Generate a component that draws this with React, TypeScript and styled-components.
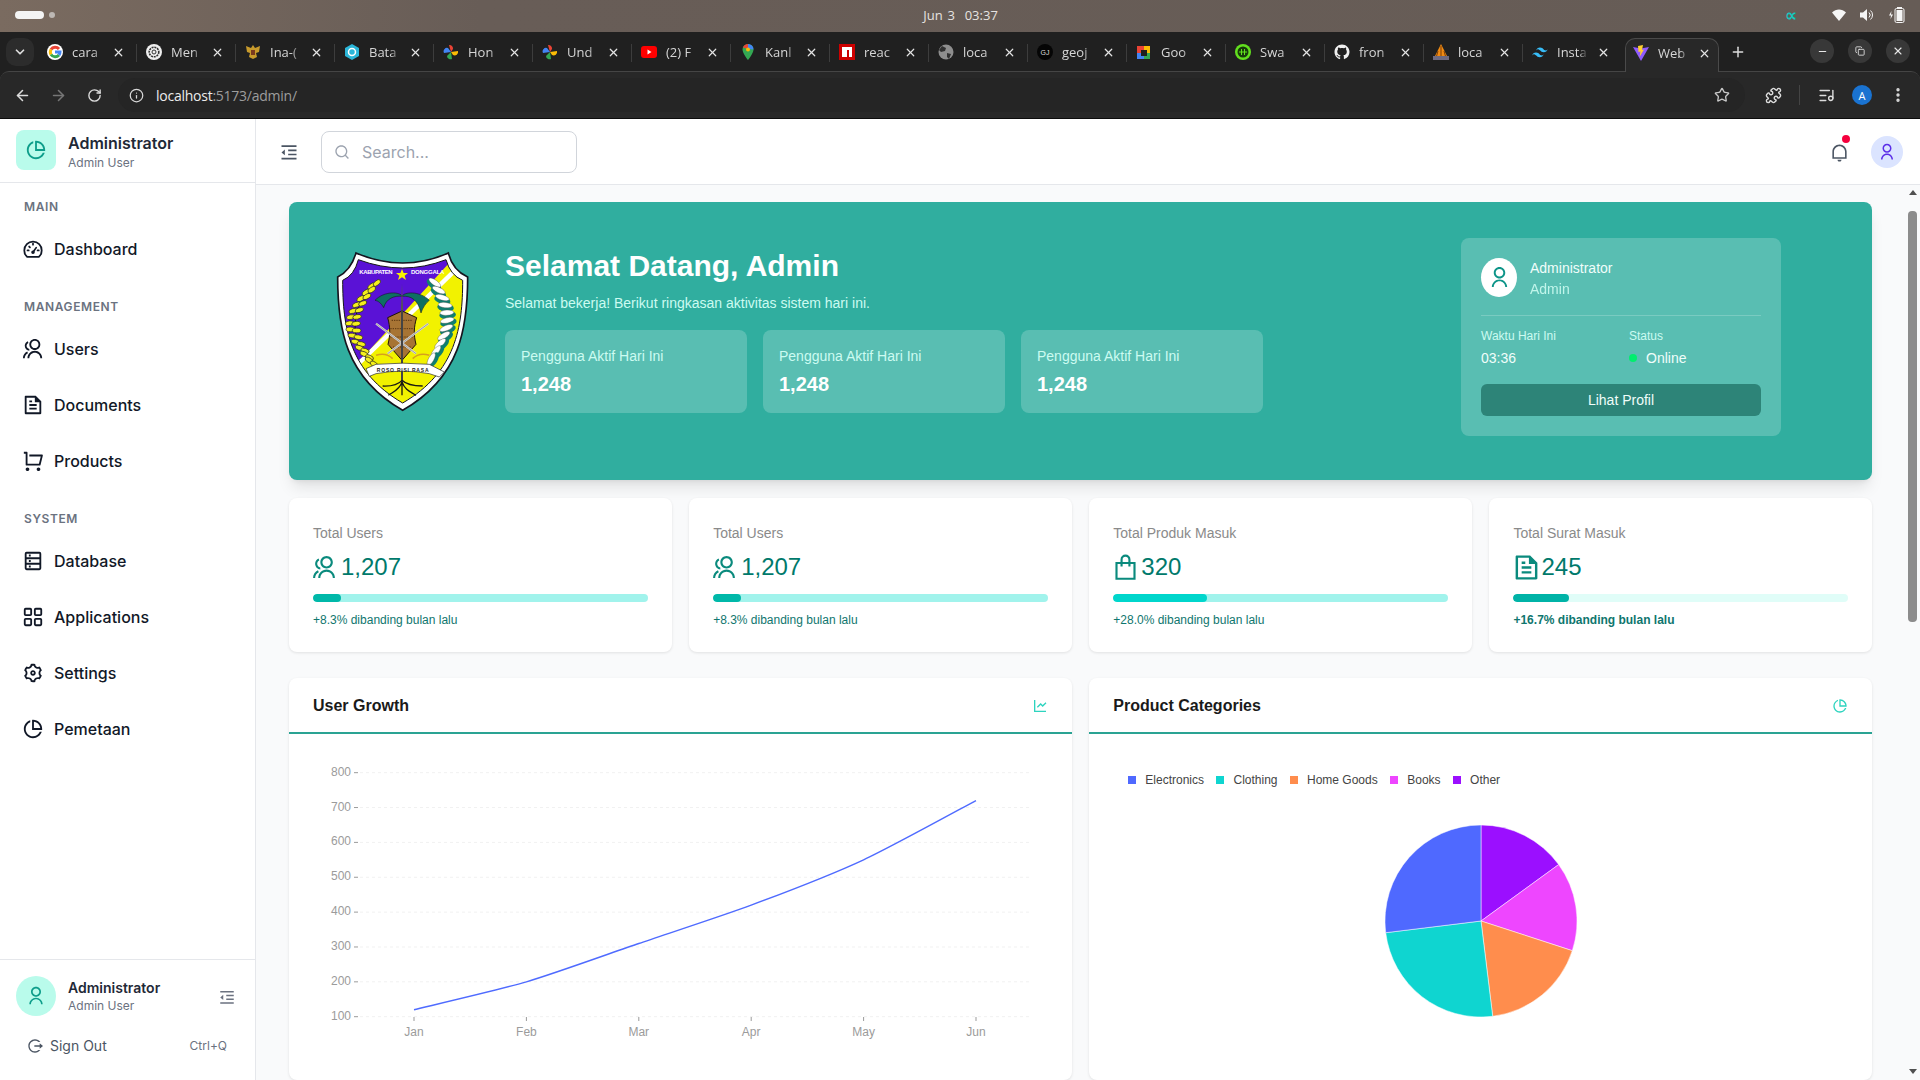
import React from 'react';
import styled, { createGlobalStyle } from 'styled-components';
import { ArrowLeft, ArrowRight, RotateCw, Info, Star, Puzzle, ListMusic, MoreVertical, Minus, X, Plus, ChevronDown, Copy, LayoutGrid } from 'lucide-react';
import {
  RiGroupLine, RiFileTextLine, RiShoppingCartLine, RiSettings3Line,
  RiPieChartLine, RiIndentDecrease, RiNotificationLine, RiUserLine, RiLogoutCircleRLine, RiSearchLine, RiLineChartLine, RiGithubFill,
} from 'react-icons/ri';

const Global = createGlobalStyle`
  html, body { margin: 0; padding: 0; width: 1920px; height: 1080px; overflow: hidden; background: #fff; }
  * { box-sizing: border-box; }
`;

const Screen = styled.div`
  width: 1920px; height: 1080px; display: flex; flex-direction: column; overflow: hidden;
  font-family: "Liberation Sans", Arial, sans-serif;
`;

/* ---------- OS bar ---------- */
const OsBar = styled.div`
  height: 32px; flex: none; display: grid; grid-template-columns: 1fr auto 1fr; align-items: center; padding: 0 14px 2px 15px;
  background: linear-gradient(to right, #7a6b60, #685d57 25%, #665c56);
`;
const Workspaces = styled.div`display: flex; align-items: center; gap: 5px;`;
const WorkspacePill = styled.span`width: 29px; height: 8px; border-radius: 4px; background: #f4f4f4;`;
const WorkspaceDot = styled.span`width: 6px; height: 6px; border-radius: 50%; background: #bdb8b4;`;
const Clock = styled.div`
  font-family: "Open Sans", sans-serif; font-size: 13px; color: #e6e3e0; word-spacing: 1.5px; white-space: pre;
`;
const Tray = styled.div`display: flex; align-items: center; justify-content: flex-end; gap: 14px; color: #f2f2f2;`;
const TrayAlpha = styled.span`font-family: "DejaVu Sans", sans-serif; font-size: 17px; font-style: italic; font-weight: 700; color: #14c8c0; margin-right: 21px;`;

/* ---------- Tabs ---------- */
const TabStrip = styled.div`
  height: 39px; flex: none; background: #202020; display: flex; align-items: flex-end; position: relative; z-index: 1; color: #d4d4d4;
`;
const TabListBtn = styled.div`
  width: 28px; height: 28px; margin: 0 4px 5px 6px; border-radius: 10px; background: #2c2c2c; display: flex; align-items: center; justify-content: center; color: #ddd;
`;
const Tab = styled.div<{ $active?: boolean; $last?: boolean }>`
  width: ${p => (p.$active ? '94px' : '99px')}; height: 33px; position: relative; display: flex; align-items: center; padding: 0 0 5px 9px;
  margin-left: ${p => (p.$active ? '3px' : '0')};
  margin-right: ${p => (p.$active ? '2px' : '0')};
  background: ${p => (p.$active ? '#282828' : 'transparent')};
  border-radius: 10px 10px 0 0;
  ${p => p.$active ? 'border: 1px solid #4a4a4a; border-bottom: none; margin-bottom: -1px; height: 34px; padding-left: 7px;' : ''}
  ${p => (!p.$active && !p.$last) ? `&::after { content: ''; position: absolute; right: 0; top: 6px; width: 1px; height: 18px; background: #3d3d3d; }` : ''}
`;
const TabTitle = styled.span`
  width: 31px; margin-left: 9px; white-space: nowrap; font-family: "Open Sans", sans-serif; font-size: 13px; color: #d6d6d6;
  -webkit-mask-image: linear-gradient(to right, #000 70%, transparent);
  mask-image: linear-gradient(to right, #000 70%, transparent);
`;
const TabClose = styled.span`margin-left: 8px; width: 14px; display: flex; justify-content: center; color: #e4e4e4;`;
const NewTab = styled.div`margin: 0 0 11px 9px; display: flex; color: #ddd;`;
const WindowBtns = styled.div`margin: 0 10px 8px auto; display: flex; gap: 14px;`;
const WindowBtn = styled.div`
  width: 24px; height: 24px; border-radius: 50%; background: #383838; display: flex; align-items: center; justify-content: center; color: #e8e8e8;
`;

/* ---------- Toolbar ---------- */
const ToolbarWrap = styled.div`height: 48px; flex: none; background: #202020; border-bottom: 1px solid #0c0c0c;`;
const Toolbar = styled.div`
  height: 47px; background: #282828; border-top: 1px solid #454545; border-radius: 9px 9px 0 0; display: flex; align-items: center; padding: 0 4px; color: #dcdcdc;
`;
const ToolBtn = styled.div<{ $dim?: boolean }>`
  width: 36px; height: 36px; flex: none; display: flex; align-items: center; justify-content: center; color: ${p => (p.$dim ? '#767676' : '#dcdcdc')};
`;
const Omnibox = styled.div`
  flex: 1; height: 34px; margin: 0 10px 0 6px; border-radius: 17px; background: #252525; display: flex; align-items: center; padding-left: 9px; padding-right: 15px;
`;
const OmniInfo = styled.div`width: 18px; display: flex; justify-content: center; color: #d8d8d8; margin-right: 11px;`;
const Url = styled.div`font-family: "Open Sans", sans-serif; font-size: 14px; letter-spacing: -0.25px; color: #9d9d9d; flex: 1;`;
const UrlHost = styled.span`color: #ececec;`;
const ToolSep = styled.div`width: 1px; height: 20px; background: #444; margin: 0 8px;`;
const ProfileDot = styled.div`
  width: 20px; height: 20px; border-radius: 50%; background: #1a73d1; color: #fff; font-size: 11px; display: flex; align-items: center; justify-content: center; font-family: "Open Sans", sans-serif;
`;

/* ---------- App frame ---------- */
const Body = styled.div`flex: 1; min-height: 0; display: flex; background: #fff;`;
const Sidebar = styled.aside`
  width: 256px; flex: none; display: flex; flex-direction: column; border-right: 1px solid #e5e7eb; background: #fff; font-family: Inter, sans-serif;
`;
const SideHeader = styled.div`height: 64px; flex: none; border-bottom: 1px solid #e5e7eb; display: flex; align-items: center; gap: 12px; padding: 0 16px 1px;`;
const LogoTile = styled.div`width: 40px; height: 40px; border-radius: 8px; background: #b9fbeb; color: #0d9d8a; display: flex; align-items: center; justify-content: center;`;
const BrandText = styled.div`display: flex; flex-direction: column; padding-top: 2px;`;
const BrandName = styled.div`font-size: 16px; line-height: 24px; font-weight: 600; color: #1f2937;`;
const BrandSub = styled.div`font-size: 12px; line-height: 16px; color: #6b7280;`;
const Nav = styled.nav`flex: 1; padding-top: 16px;`;
const NavSection = styled.div`margin-bottom: 22px;`;
const NavLabel = styled.div`padding-left: 24px; margin-bottom: 6px; font-size: 12px; line-height: 16px; font-weight: 600; letter-spacing: 0.6px; color: #6b7280;`;
const NavItem = styled.div`height: 56px; display: flex; align-items: center; gap: 10px; padding: 0 22px; font-size: 16px; font-weight: 500; color: #111827;`;
const Flip = styled.span<{ $size: number }>`display: inline-flex; transform: scaleX(-1); font-size: ${p => p.$size}px;`;
const SideFooter = styled.div`height: 121px; flex: none; border-top: 1px solid #e5e7eb; padding: 16px 16px 0;`;
const FooterUser = styled.div`display: flex; align-items: center; gap: 12px;`;
const FooterAvatar = styled.div`width: 40px; height: 40px; border-radius: 50%; background: #b9fbeb; color: #0d9d8a; display: flex; align-items: center; justify-content: center;`;
const FooterName = styled.div`font-size: 14px; line-height: 20px; font-weight: 600; color: #1f2937;`;
const FooterFold = styled.div`margin-left: auto; margin-right: 3px; margin-top: 2px; color: #6b7280; display: flex;`;
const SignOut = styled.div`display: flex; align-items: center; gap: 7px; margin-top: 20px; padding: 0 12px 0 11px; font-size: 14px; line-height: 20px; color: #4b5563;`;
const Shortcut = styled.span`margin-left: auto; font-size: 12px; color: #6b7280;`;

const Main = styled.div`flex: 1; min-width: 0; display: flex; flex-direction: column; background: #f9fafb;`;
const TopBar = styled.header`
  height: 66px; flex: none; background: #fff; border-bottom: 1px solid #e5e7eb; display: flex; align-items: center; padding: 1px 17px 0 23px; font-family: Inter, sans-serif;
`;
const MenuBtn = styled.div`width: 42px; flex: none; display: flex; color: #4b5563;`;
const SearchBox = styled.div`
  width: 256px; height: 42px; border: 1px solid #d1d5db; border-radius: 8px; display: flex; align-items: center; gap: 12px; padding-left: 12px; font-size: 16px; color: #9ca3af; background: #fff;
`;
const TopRight = styled.div`margin-left: auto; display: flex; align-items: center; gap: 22px;`;
const Bell = styled.div`position: relative; display: flex; color: #4b5563;`;
const BellDot = styled.span`position: absolute; top: -8px; right: -1px; width: 8px; height: 8px; border-radius: 50%; background: #f5003d;`;
const TopAvatar = styled.div`width: 32px; height: 32px; border-radius: 50%; background: #dbe4ff; color: #5b2ee8; display: flex; align-items: center; justify-content: center;`;

const ScrollRow = styled.div`flex: 1; min-height: 0; display: flex;`;
const Content = styled.main`flex: 1; min-width: 0; overflow: hidden; padding: 17px 36px 0 33px;`;
const Rail = styled.div`width: 12px; flex: none; display: flex; flex-direction: column; align-items: flex-start; padding-top: 5px;`;
const RailArrow = styled.div<{ $down?: boolean }>`
  width: 0; height: 0; margin-left: 1px; border-left: 4px solid transparent; border-right: 4px solid transparent;
  ${p => (p.$down ? 'border-top: 5px solid #505050; margin-top: auto; margin-bottom: 6px;' : 'border-bottom: 5px solid #505050;')}
`;
const RailThumb = styled.div`width: 9px; height: 411px; margin-top: 16px; background: #8c8c8c; border-radius: 4px;`;

/* ---------- Hero ---------- */
const Hero = styled.section`
  height: 278px; border-radius: 8px; background: #30ae9f; box-shadow: 0 10px 15px -3px rgba(0,0,0,.1), 0 4px 6px -4px rgba(0,0,0,.1);
  display: flex; justify-content: space-between; padding: 36px 91px 0 47px; color: #fff;
`;
const HeroLeft = styled.div`display: flex; align-items: flex-start;`;
const LogoSvg = styled.svg`width: 134px; height: 161px; margin: 13px 35px 0 0; flex: none;`;
const HeroText = styled.div`padding-top: 10px;`;
const HeroTitle = styled.h1`margin: 0; font-size: 30px; line-height: 36px; font-weight: 700;`;
const HeroSub = styled.p`margin: 9px 0 0; font-size: 14px; line-height: 20px; color: #ccfbf1;`;
const MiniRow = styled.div`display: flex; gap: 16px; margin-top: 17px;`;
const MiniCard = styled.div`width: 242px; height: 83px; padding: 16px; border-radius: 8px; background: rgba(255,255,255,.2);`;
const MiniLabel = styled.div`font-size: 14px; line-height: 20px; color: #ccfbf1;`;
const MiniValue = styled.div`margin-top: 4px; font-size: 20px; line-height: 28px; font-weight: 700; color: #fff;`;
const ProfileCard = styled.div`width: 320px; height: 198px; padding: 20px 20px 0; border-radius: 8px; background: rgba(255,255,255,.2);`;
const ProfileTop = styled.div`display: flex; gap: 13px; padding-bottom: 15px; border-bottom: 1px solid rgba(255,255,255,.2);`;
const ProfileAvatar = styled.div`width: 36px; height: 39px; border-radius: 50%; background: #fff; color: #0d9488; display: flex; align-items: center; justify-content: center; margin-bottom: 2px;`;
const ProfileName = styled.div`font-size: 14px; line-height: 21px; color: #f0fdfa;`;
const ProfileRole = styled(ProfileName)`color: #ccfbf1; opacity: .9;`;
const ProfileGrid = styled.div`display: grid; grid-template-columns: 148px 1fr; padding-top: 12px;`;
const PKey = styled.div`font-size: 12px; line-height: 16px; color: #ccfbf1;`;
const PVal = styled.div`margin-top: 4px; font-size: 14px; line-height: 20px; color: #f0fdfa; display: flex; align-items: center; gap: 9px;`;
const OnlineDot = styled.span`width: 8px; height: 8px; border-radius: 50%; background: #00ee6e;`;
const ProfileBtn = styled.div`margin-top: 16px; height: 32px; border-radius: 6px; background: #2d8478; color: #f0fdfa; font-size: 14px; display: flex; align-items: center; justify-content: center;`;

/* ---------- Stats ---------- */
const StatGrid = styled.div`display: grid; grid-template-columns: repeat(4, 1fr); gap: 17.6px; margin-top: 18px;`;
const StatCard = styled.div`height: 154px; padding: 25px 24px 0; border-radius: 8px; background: #fff; box-shadow: 0 1px 3px rgba(0,0,0,.1);`;
const StatLabel = styled.div`font-size: 14px; line-height: 20px; color: #8a8a8a;`;
const StatValueRow = styled.div`display: flex; align-items: center; height: 32px; margin-top: 8px; font-size: 24px; color: #00796b;`;
const StatIcon = styled.span<{ $flip?: boolean }>`
  width: 29px; margin-left: -1px; flex: none; display: flex; color: #0a8a7d; ${p => p.$flip ? 'transform: scaleX(-1); justify-content: flex-end;' : ''}
`;
const Track = styled.div<{ $bg: string }>`height: 8px; margin-top: 11px; border-radius: 4px; background: ${p => p.$bg}; overflow: hidden;`;
const Fill = styled.div<{ $bg: string }>`height: 100%; border-radius: 4px; background: ${p => p.$bg};`;
const StatNote = styled.div<{ $bold?: boolean }>`margin-top: 10px; font-size: 12px; line-height: 16px; color: #0f766e; font-weight: ${p => (p.$bold ? 700 : 400)};`;

/* ---------- Charts ---------- */
const ChartGrid = styled.div`display: grid; grid-template-columns: 1fr 1fr; gap: 17.6px; margin-top: 26px;`;
const ChartCard = styled.div`height: 402px; border-radius: 8px; background: #fff; box-shadow: 0 1px 3px rgba(0,0,0,.1); overflow: hidden;`;
const ChartHead = styled.div`height: 56px; padding: 2px 24px 0; border-bottom: 2px solid #2aa393; display: flex; align-items: center; justify-content: space-between;`;
const ChartTitle = styled.div`font-size: 16px; font-weight: 700; color: #1a1a1a;`;
const ChartIcon = styled.div`display: flex; color: #2dd4bf;`;
const ChartSvg = styled.svg`display: block;`;
const AxisText = styled.text`font-family: "Liberation Sans", Arial, sans-serif; font-size: 12px; fill: #9b9b9b;`;
const Legend = styled.div`display: flex; gap: 12.5px; padding: 38px 0 0 39px; height: 55px;`;
const LegendItem = styled.div`display: flex; align-items: center; gap: 9px; font-size: 12px; line-height: 16px; color: #444; height: 16px;`;
const LegendSwatch = styled.span<{ $c: string }>`width: 8px; height: 8px; background: ${p => p.$c};`;
const PieWrap = styled.div`display: flex; justify-content: center; padding: 32px 0 0 1px;`;

/* ---------- Drawings ---------- */
type FavKind = 'google' | 'openai' | 'garuda' | 'hex' | 'pin' | 'yt' | 'maps' | 'npm' | 'globe' | 'gj' | 'meet' | 'swag' | 'gh' | 'mui' | 'tw' | 'vite';
const FavSvg = styled.svg`width: 16px; height: 16px; flex: none;`;
const GhWrap = styled.span`display: flex; flex: none; margin: 0 -1px; color: #f0f0f0;`;

const Fav = ({ k }: { k: FavKind }) => {
  if (k === 'gh') return <GhWrap><RiGithubFill size={18} /></GhWrap>;
  return (
    <FavSvg viewBox="0 0 16 16">
      {k === 'google' && (<g fill="none" strokeWidth="3"><circle cx="8" cy="8" r="8" fill="#fff" stroke="none" /><path d="M12 5A5 5 0 0 0 4 5.500" stroke="#ea4335" /><path d="M4 5.500a5 5 0 0 0 0 5" stroke="#fbbc05" /><path d="M4 10.500a5 5 0 0 0 8 .5" stroke="#34a853" /><path d="M8 8h5a5 5 0 0 1-1 3" stroke="#4285f4" /></g>)}
      {k === 'openai' && (<g><circle cx="8" cy="8" r="8" fill="#efefef" /><circle cx="8" cy="8" r="4.800" fill="none" stroke="#333" strokeWidth="1.600" strokeDasharray="2 .8" /><circle cx="8" cy="8" r="2" fill="none" stroke="#333" /></g>)}
      {k === 'garuda' && (<g><path d="M8 1l2 3 5-2-1 6-3 1 1 4-4 2-4-2 1-4-3-1-1-6 5 2z" fill="#c89b2c" /><rect x="6" y="6" width="4" height="5" fill="#7a3a1e" /></g>)}
      {k === 'hex' && (<g><path d="M8 0l7 4v8l-7 4-7-4V4z" fill="#2bb6d8" /><circle cx="8" cy="8" r="3.500" fill="none" stroke="#fff" strokeWidth="1.500" /></g>)}
      {k === 'pin' && (<g><path d="M8 8L6 1a3.500 3.500 0 0 1 4 4z" fill="#ea4335" /><path d="M8 8l7-1a3.500 3.500 0 0 1-5 4z" fill="#fbbc05" /><path d="M8 8l1 7a3.500 3.500 0 0 1-5-3z" fill="#34a853" /><path d="M8 8L1 9a3.500 3.500 0 0 1 4-5z" fill="#4285f4" /></g>)}
      {k === 'yt' && (<g><rect x="0" y="2" width="16" height="12" rx="3" fill="#f00" /><path d="M6.500 5.500l4 2.500-4 2.500z" fill="#fff" /></g>)}
      {k === 'maps' && (<g><path d="M8 0a5.500 5.500 0 0 0-5.500 5.500C2.500 9.500 8 16 8 16s5.500-6.500 5.500-10.500A5.500 5.500 0 0 0 8 0z" fill="#34a853" /><path d="M3 3.500A5.500 5.500 0 0 1 8 0v5z" fill="#ea4335" /><path d="M8 0a5.500 5.500 0 0 1 5.500 5.500L8 5z" fill="#4285f4" /><circle cx="8" cy="5.500" r="2" fill="#fbbc05" /></g>)}
      {k === 'npm' && (<g><rect width="16" height="16" fill="#cc0000" /><path d="M3 3h10v10h-3V6H8v7H3z" fill="#fff" /></g>)}
      {k === 'globe' && (<g><circle cx="8" cy="8" r="7.500" fill="#8e8e8e" /><path d="M4 2l4 2-1 3-4 1-2-2zM9 9l4 1-2 5-2-2z" fill="#303030" /></g>)}
      {k === 'gj' && (<g><circle cx="8" cy="8" r="8" fill="#050505" /><text x="8" y="10.500" textAnchor="middle" fontSize="7" fontFamily="Liberation Sans" fill="#ddd">GJ</text></g>)}
      {k === 'meet' && (<g><rect x="1" y="2" width="7" height="7" fill="#ea4335" /><rect x="8" y="2" width="6" height="7" fill="#fbbc05" /><rect x="1" y="9" width="7" height="6" fill="#4285f4" /><rect x="8" y="9" width="6" height="6" fill="#34a853" /><rect x="5" y="6" width="6" height="6" fill="#202020" /></g>)}
      {k === 'swag' && (<g><circle cx="8" cy="8" r="8" fill="#62e01e" /><circle cx="8" cy="8" r="5.500" fill="#173a0b" /><path d="M4 8h8M6.500 5v6M9.500 5v6" stroke="#62e01e" strokeWidth="1" /></g>)}
      {k === 'mui' && (<g><path d="M8 0l7 14H1z" fill="#f08a12" /><path d="M8 2v12M5 7l-2 7M11 7l2 7" stroke="#7a3c06" /><rect x="0" y="12" width="16" height="4" fill="#6e6a80" /></g>)}
      {k === 'tw' && (<path d="M8 3.500c-2 0-3.300 1-4 3 .8-1 1.700-1.400 2.700-1.100.6.200 1 .6 1.500 1.100.8.800 1.700 1.700 3.500 1.700 2 0 3.300-1 4-3-.8 1-1.700 1.400-2.700 1.100-.6-.2-1-.6-1.500-1.100C10.700 4.400 9.800 3.500 8 3.500zM4 8.500c-2 0-3.300 1-4 3 .8-1 1.700-1.400 2.700-1.100.6.200 1 .6 1.500 1.100.8.800 1.700 1.700 3.500 1.700 2 0 3.300-1 4-3-.8 1-1.700 1.400-2.700 1.100-.6-.2-1-.6-1.500-1.100-.8-.8-1.700-1.700-3.500-1.700z" fill="#38bdf8" />)}
      {k === 'vite' && (<g><path d="M0 2l8 14 8-14-8 1.500z" fill="#8f5bff" /><path d="M5 1l5-1-1 5 2-.4L6.500 12l1-5.500-2 .4z" fill="#ffcf2e" /></g>)}
    </FavSvg>
  );
};

const WifiIcon = () => (<svg width="14" height="14" viewBox="0 0 14 14"><path d="M0 4.500C2 2.500 4.500 1.500 7 1.500s5 1 7 3L7 13z" fill="#f5f5f5" /></svg>);
const VolumeIcon = () => (<svg width="14" height="14" viewBox="0 0 14 14" fill="none"><path d="M0 4.500h3L7 1v12L3 9.500H0z" fill="#f5f5f5" /><path d="M9 4.500a3.500 3.500 0 0 1 0 5M10.500 2.500a6 6 0 0 1 0 9" stroke="#f5f5f5" strokeWidth="1" /></svg>);
const BatteryIcon = () => (<svg width="18" height="16" viewBox="0 0 18 16" fill="none"><path d="M3.500 4L1 8.500h2L2.500 12 5 7.500H3z" fill="#f5f5f5" /><rect x="7" y="1.500" width="9" height="14" rx="1.500" stroke="#f5f5f5" /><rect x="9" y="0" width="5" height="2" fill="#f5f5f5" /><rect x="8.500" y="3" width="6" height="11" fill="#f5f5f5" /></svg>);

const GaugeIcon = () => (
  <svg width="22" height="22" viewBox="0 0 24 24" fill="none" stroke="currentColor" strokeWidth="1.900" strokeLinecap="round">
    <path d="M5.600 20.500C3.700 18.800 2.500 16.400 2.500 13.500a9.500 9.500 0 0 1 19 0c0 2.900-1.200 5.300-3.100 7Z" />
    <path d="M12 15.500l3.500-5M12 6v1.300M6 13.500h1.300M17 13.500h1.300M7.800 9.300l.9.900" />
    <circle cx="12" cy="15.500" r="1" fill="currentColor" />
  </svg>
);
const DatabaseIcon = () => (
  <svg width="22" height="22" viewBox="0 0 24 24" fill="none" stroke="currentColor" strokeWidth="2">
    <rect x="4" y="3" width="16" height="18" rx="1" />
    <path d="M4 9h16M4 15h16M7.500 6h2M7.500 12h2M7.500 18h2" />
  </svg>
);
const BagIcon = () => (
  <svg width="27" height="27" viewBox="0 0 24 24" fill="none" stroke="currentColor" strokeWidth="1.900">
    <path d="M4 8h16v14H4z" />
    <path d="M8.500 11V5a3.500 3.500 0 0 1 7 0v6" />
  </svg>
);

const rice = Array.from({ length: 13 }, (_, i) => {
  const t = i / 12;
  const x = 212 - 60 * Math.sin(t * Math.PI) * 0.95 + (t < .5 ? 12 * (0.5 - t) : 0);
  const y = 192 + t * 232;
  return { x, y, a: -40 + t * 70 };
});
const cotton = Array.from({ length: 11 }, (_, i) => {
  const t = i / 10;
  const x = 400 + 44 * Math.sin(t * Math.PI) * .95 + (t > .6 ? -(t - .6) * 10 : 0);
  const y = 192 + t * 225;
  return { x, y, a: 35 - t * 95 };
});

const DonggalaLogo = () => (
  <LogoSvg viewBox="105 92 402 483">
    <defs>
      <clipPath id="field"><path d="M172 118Q240 143 305 143Q370 143 435 118Q448 165 485 180C485 320 465 455 305 548C145 455 125 320 125 180Q160 165 172 118Z" /></clipPath>
    </defs>
    <path d="M165 98Q235 128 305 128Q375 128 442 98Q455 150 500 170C500 320 480 470 305 570C130 470 110 320 110 170Q150 150 165 98Z" fill="#fff" stroke="#15151f" strokeWidth="5" />
    <g clipPath="url(#field)">
      <rect x="100" y="100" width="420" height="480" fill="#f2f200" />
      <path d="M100 100H470L150 450H100Z" fill="#5a12d6" />
      <path d="M462 150L162 440" stroke="#fff" strokeWidth="13" />
    </g>
    <path d="M172 118Q240 143 305 143Q370 143 435 118Q448 165 485 180C485 320 465 455 305 548C145 455 125 320 125 180Q160 165 172 118Z" fill="none" stroke="#15151f" strokeWidth="3" />
    <text x="225" y="161" textAnchor="middle" fontFamily="Liberation Sans" fontWeight="700" fontSize="18" fill="#fff" textLength="100">KABUPATEN</text>
    <text x="380" y="161" textAnchor="middle" fontFamily="Liberation Sans" fontWeight="700" fontSize="18" fill="#fff" textLength="100">DONGGALA</text>
    <path d="M303 146l5 12h13l-10 8 4 13-12-8-12 8 4-13-10-8h13z" fill="#f7f200" />
    <path d="M236 182C170 220 120 340 215 432" fill="none" stroke="#111" strokeWidth="3" />
    {rice.map((r, i) => (
      <g key={i} transform={`translate(${r.x} ${r.y}) rotate(${r.a})`}>
        <ellipse cx="-9" cy="0" rx="13" ry="7" fill="#f5ef1d" stroke="#222" strokeWidth="2" />
        <ellipse cx="10" cy="3" rx="13" ry="7" fill="#f5ef1d" stroke="#222" strokeWidth="2" />
      </g>
    ))}
    {cotton.map((c, i) => (
      <g key={i} transform={`translate(${c.x} ${c.y}) rotate(${c.a})`}>
        <ellipse cx="0" cy="2" rx="25" ry="12" fill="#0f7f70" />
        <ellipse cx="-2" cy="-5" rx="21" ry="8" fill="#fff" stroke="#444" strokeWidth="1" />
      </g>
    ))}
    <path d="M222 240C250 210 300 215 303 228C280 225 255 235 248 262C240 248 232 242 222 240Z" fill="#0e6f62" stroke="#111" strokeWidth="1.500" />
    <path d="M385 240C355 210 308 215 303 228C330 225 352 240 360 278C365 262 375 248 385 240Z" fill="#0e6f62" stroke="#111" strokeWidth="1.500" />
    <path d="M303 190L307 290H299Z" fill="#555" />
    <path d="M303 272L347 292C338 320 338 345 345 372L303 420L261 372C268 345 268 320 260 292Z" fill="#a77434" stroke="#1e1208" strokeWidth="3" />
    <path d="M272 300H334M268 325H338M268 350H338M276 380H330" stroke="#5a3510" strokeWidth="3" strokeDasharray="4 3" />
    <path d="M225 310L345 400M382 310L260 400" stroke="#d8d8d8" strokeWidth="6" />
    <path d="M225 310L345 400M382 310L260 400" stroke="#333" strokeWidth="1" />
    <path d="M303 270V490" stroke="#444" strokeWidth="6" />
    <path d="M225 405Q255 395 275 415M385 405Q355 395 335 415" stroke="#d6a11e" strokeWidth="5" fill="none" />
    <path d="M303 480C290 495 270 498 245 497M303 480C318 495 340 497 365 497M303 485C295 510 275 515 262 525M303 485C312 510 330 515 345 525M303 490V525" stroke="#1a1a12" strokeWidth="4" fill="none" />
    <path d="M195 445L225 432Q305 425 385 432L430 455L415 470L385 460Q305 445 225 460L205 468Z" fill="#fff" stroke="#222" strokeWidth="2" />
    <text x="305" y="456" textAnchor="middle" fontFamily="Liberation Sans" fontWeight="700" fontSize="15" fill="#222" textLength="155">ROSO RISI RASA</text>
  </LogoSvg>
);

/* ---------- Line chart ---------- */
const months = ['Jan', 'Feb', 'Mar', 'Apr', 'May', 'Jun'];
const values = [120, 200, 310, 420, 550, 720];
const xAt = (i: number) => 414 + i * 112.4;
const yAt = (v: number) => 1016.7 - (v - 100) * 0.3486;
const linePath = () => {
  const pts = values.map((v, i) => [xAt(i), yAt(v)]);
  let d = `M${pts[0][0]} ${pts[0][1]}`;
  for (let i = 0; i < pts.length - 1; i++) {
    const p0 = pts[Math.max(i - 1, 0)], p1 = pts[i], p2 = pts[i + 1], p3 = pts[Math.min(i + 2, pts.length - 1)];
    const t = 0.12;
    d += `C${p1[0] + (p2[0] - p0[0]) * t} ${p1[1] + (p2[1] - p0[1]) * t} ${p2[0] - (p3[0] - p1[0]) * t} ${p2[1] - (p3[1] - p1[1]) * t} ${p2[0]} ${p2[1]}`;
  }
  return d;
};

const LineChart = () => (
  <ChartSvg width="783" height="346" viewBox="289 734 783 346">
    {[800, 700, 600, 500, 400, 300, 200, 100].map(v => (
      <g key={v}>
        <line x1="360" x2="1032" y1={yAt(v)} y2={yAt(v)} stroke="#f1f1f1" strokeDasharray="3 3" />
        <line x1="354" x2="358" y1={yAt(v)} y2={yAt(v)} stroke="#9b9b9b" />
        <AxisText x="351" y={yAt(v) + 3} textAnchor="end">{v}</AxisText>
      </g>
    ))}
    {months.map((m, i) => (
      <g key={m}>
        <line x1={xAt(i)} x2={xAt(i)} y1="1017" y2="1021" stroke="#9b9b9b" />
        <AxisText x={xAt(i)} y="1036" textAnchor="middle">{m}</AxisText>
      </g>
    ))}
    <path d={linePath()} fill="none" stroke="#4f6bff" strokeWidth="1.400" />
  </ChartSvg>
);

/* ---------- Pie chart ---------- */
const slices = [
  { from: 0, to: 54, c: '#9b0fff' },
  { from: 54, to: 108, c: '#ee46ff' },
  { from: 108, to: 173, c: '#ff8d4d' },
  { from: 173, to: 263, c: '#0fd5d0' },
  { from: 263, to: 360, c: '#4f69ff' },
];
const polar = (deg: number, r: number) => {
  const a = (deg * Math.PI) / 180;
  return [100 + r * Math.sin(a), 100 - r * Math.cos(a)];
};
const PieChart = () => (
  <ChartSvg width="200" height="200" viewBox="0 0 200 200">
    {slices.map(s => {
      const [x1, y1] = polar(s.from, 96);
      const [x2, y2] = polar(s.to, 96);
      return <path key={s.c} d={`M100 100L${x1} ${y1}A96 96 0 ${s.to - s.from > 180 ? 1 : 0} 1 ${x2} ${y2}Z`} fill={s.c} stroke="#fff" strokeWidth="0.500" />;
    })}
  </ChartSvg>
);

/* ---------- Data ---------- */
const tabs: { t: string; k: FavKind }[] = [
  { t: 'cara', k: 'google' }, { t: 'Men', k: 'openai' }, { t: 'Ina-(', k: 'garuda' }, { t: 'Bata', k: 'hex' },
  { t: 'Hon', k: 'pin' }, { t: 'Und', k: 'pin' }, { t: '(2) F', k: 'yt' }, { t: 'Kanl', k: 'maps' }, { t: 'reac', k: 'npm' },
  { t: 'loca', k: 'globe' }, { t: 'geoj', k: 'gj' }, { t: 'Goo', k: 'meet' }, { t: 'Swa', k: 'swag' }, { t: 'fron', k: 'gh' },
  { t: 'loca', k: 'mui' }, { t: 'Insta', k: 'tw' },
];

const stats = [
  { label: 'Total Users', value: '1,207', icon: 'users', pct: 8.3, fill: '#00b8a9', track: '#a1f3ec', note: '+8.3% dibanding bulan lalu' },
  { label: 'Total Users', value: '1,207', icon: 'users', pct: 8.3, fill: '#00b8a9', track: '#a1f3ec', note: '+8.3% dibanding bulan lalu' },
  { label: 'Total Produk Masuk', value: '320', icon: 'bag', pct: 28, fill: '#00d6cc', track: '#a1f3ec', note: '+28.0% dibanding bulan lalu' },
  { label: 'Total Surat Masuk', value: '245', icon: 'file', pct: 16.7, fill: '#00b3a7', track: '#e0fdf8', note: '+16.7% dibanding bulan lalu', bold: true },
];

const sections = [
  { label: 'MAIN', items: [{ n: 'Dashboard', i: <GaugeIcon /> }] },
  { label: 'MANAGEMENT', items: [
    { n: 'Users', i: <Flip $size={22}><RiGroupLine /></Flip> },
    { n: 'Documents', i: <RiFileTextLine size={22} /> },
    { n: 'Products', i: <RiShoppingCartLine size={22} /> },
  ] },
  { label: 'SYSTEM', items: [
    { n: 'Database', i: <DatabaseIcon /> },
    { n: 'Applications', i: <LayoutGrid size={22} strokeWidth={2} /> },
    { n: 'Settings', i: <RiSettings3Line size={22} /> },
    { n: 'Pemetaan', i: <RiPieChartLine size={22} /> },
  ] },
];

const legend = [
  { n: 'Electronics', c: '#4f69ff' }, { n: 'Clothing', c: '#0fd5d0' }, { n: 'Home Goods', c: '#ff8d4d' }, { n: 'Books', c: '#ee46ff' }, { n: 'Other', c: '#9b0fff' },
];

export default function App() {
  return (
    <Screen>
      <Global />
      <OsBar>
        <Workspaces><WorkspacePill /><WorkspaceDot /></Workspaces>
        <Clock>Jun 3  03:37</Clock>
        <Tray><TrayAlpha>∝</TrayAlpha><WifiIcon /><VolumeIcon /><BatteryIcon /></Tray>
      </OsBar>

      <TabStrip>
        <TabListBtn><ChevronDown size={14} strokeWidth={3} /></TabListBtn>
        {tabs.map((tab, i) => (
          <Tab key={i} $last={i === tabs.length - 1}>
            <Fav k={tab.k} />
            <TabTitle>{tab.t}</TabTitle>
            <TabClose><X size={13} strokeWidth={2.2} /></TabClose>
          </Tab>
        ))}
        <Tab $active>
          <Fav k="vite" />
          <TabTitle>Web</TabTitle>
          <TabClose><X size={13} strokeWidth={2.2} /></TabClose>
        </Tab>
        <NewTab><Plus size={16} strokeWidth={2.2} /></NewTab>
        <WindowBtns>
          <WindowBtn><Minus size={11} strokeWidth={2.4} /></WindowBtn>
          <WindowBtn><Copy size={10} strokeWidth={2} /></WindowBtn>
          <WindowBtn><X size={12} strokeWidth={2.2} /></WindowBtn>
        </WindowBtns>
      </TabStrip>

      <ToolbarWrap>
        <Toolbar>
          <ToolBtn><ArrowLeft size={17} strokeWidth={2.2} /></ToolBtn>
          <ToolBtn $dim><ArrowRight size={17} strokeWidth={2.2} /></ToolBtn>
          <ToolBtn><RotateCw size={15} strokeWidth={2.2} /></ToolBtn>
          <Omnibox>
            <OmniInfo><Info size={15} /></OmniInfo>
            <Url><UrlHost>localhost</UrlHost>:5173/admin/</Url>
            <Star size={16} color="#c8c8c8" />
          </Omnibox>
          <ToolBtn><Puzzle size={17} /></ToolBtn>
          <ToolSep />
          <ToolBtn><ListMusic size={17} /></ToolBtn>
          <ToolBtn><ProfileDot>A</ProfileDot></ToolBtn>
          <ToolBtn><MoreVertical size={18} strokeWidth={2.5} /></ToolBtn>
        </Toolbar>
      </ToolbarWrap>

      <Body>
        <Sidebar>
          <SideHeader>
            <LogoTile><RiPieChartLine size={22} /></LogoTile>
            <BrandText>
              <BrandName>Administrator</BrandName>
              <BrandSub>Admin User</BrandSub>
            </BrandText>
          </SideHeader>
          <Nav>
            {sections.map(s => (
              <NavSection key={s.label}>
                <NavLabel>{s.label}</NavLabel>
                {s.items.map(it => (<NavItem key={it.n}>{it.i}{it.n}</NavItem>))}
              </NavSection>
            ))}
          </Nav>
          <SideFooter>
            <FooterUser>
              <FooterAvatar><RiUserLine size={20} /></FooterAvatar>
              <div>
                <FooterName>Administrator</FooterName>
                <BrandSub>Admin User</BrandSub>
              </div>
              <FooterFold><RiIndentDecrease size={18} /></FooterFold>
            </FooterUser>
            <SignOut>
              <RiLogoutCircleRLine size={16} />
              Sign Out
              <Shortcut>Ctrl+Q</Shortcut>
            </SignOut>
          </SideFooter>
        </Sidebar>

        <Main>
          <TopBar>
            <MenuBtn><RiIndentDecrease size={20} /></MenuBtn>
            <SearchBox><RiSearchLine size={16} />Search...</SearchBox>
            <TopRight>
              <Bell><RiNotificationLine size={19} /><BellDot /></Bell>
              <TopAvatar><RiUserLine size={18} /></TopAvatar>
            </TopRight>
          </TopBar>
          <ScrollRow>
            <Content>
              <Hero>
                <HeroLeft>
                  <DonggalaLogo />
                  <HeroText>
                    <HeroTitle>Selamat Datang, Admin</HeroTitle>
                    <HeroSub>Selamat bekerja! Berikut ringkasan aktivitas sistem hari ini.</HeroSub>
                    <MiniRow>
                      {[0, 1, 2].map(i => (
                        <MiniCard key={i}>
                          <MiniLabel>Pengguna Aktif Hari Ini</MiniLabel>
                          <MiniValue>1,248</MiniValue>
                        </MiniCard>
                      ))}
                    </MiniRow>
                  </HeroText>
                </HeroLeft>
                <ProfileCard>
                  <ProfileTop>
                    <ProfileAvatar><RiUserLine size={23} /></ProfileAvatar>
                    <div>
                      <ProfileName>Administrator</ProfileName>
                      <ProfileRole>Admin</ProfileRole>
                    </div>
                  </ProfileTop>
                  <ProfileGrid>
                    <div>
                      <PKey>Waktu Hari Ini</PKey>
                      <PVal>03:36</PVal>
                    </div>
                    <div>
                      <PKey>Status</PKey>
                      <PVal><OnlineDot />Online</PVal>
                    </div>
                  </ProfileGrid>
                  <ProfileBtn>Lihat Profil</ProfileBtn>
                </ProfileCard>
              </Hero>

              <StatGrid>
                {stats.map((s, i) => (
                  <StatCard key={i}>
                    <StatLabel>{s.label}</StatLabel>
                    <StatValueRow>
                      <StatIcon $flip={s.icon === 'users'}>
                        {s.icon === 'users' && <RiGroupLine size={25} />}
                        {s.icon === 'bag' && <BagIcon />}
                        {s.icon === 'file' && <RiFileTextLine size={29} />}
                      </StatIcon>
                      {s.value}
                    </StatValueRow>
                    <Track $bg={s.track}><Fill $bg={s.fill} style={{ width: `${s.pct}%` }} /></Track>
                    <StatNote $bold={s.bold}>{s.note}</StatNote>
                  </StatCard>
                ))}
              </StatGrid>

              <ChartGrid>
                <ChartCard>
                  <ChartHead>
                    <ChartTitle>User Growth</ChartTitle>
                    <ChartIcon><RiLineChartLine size={16} /></ChartIcon>
                  </ChartHead>
                  <LineChart />
                </ChartCard>
                <ChartCard>
                  <ChartHead>
                    <ChartTitle>Product Categories</ChartTitle>
                    <ChartIcon><RiPieChartLine size={16} /></ChartIcon>
                  </ChartHead>
                  <Legend>
                    {legend.map(l => (
                      <LegendItem key={l.n}><LegendSwatch $c={l.c} />{l.n}</LegendItem>
                    ))}
                  </Legend>
                  <PieWrap><PieChart /></PieWrap>
                </ChartCard>
              </ChartGrid>
            </Content>
            <Rail>
              <RailArrow />
              <RailThumb />
              <RailArrow $down />
            </Rail>
          </ScrollRow>
        </Main>
      </Body>
    </Screen>
  );
}
